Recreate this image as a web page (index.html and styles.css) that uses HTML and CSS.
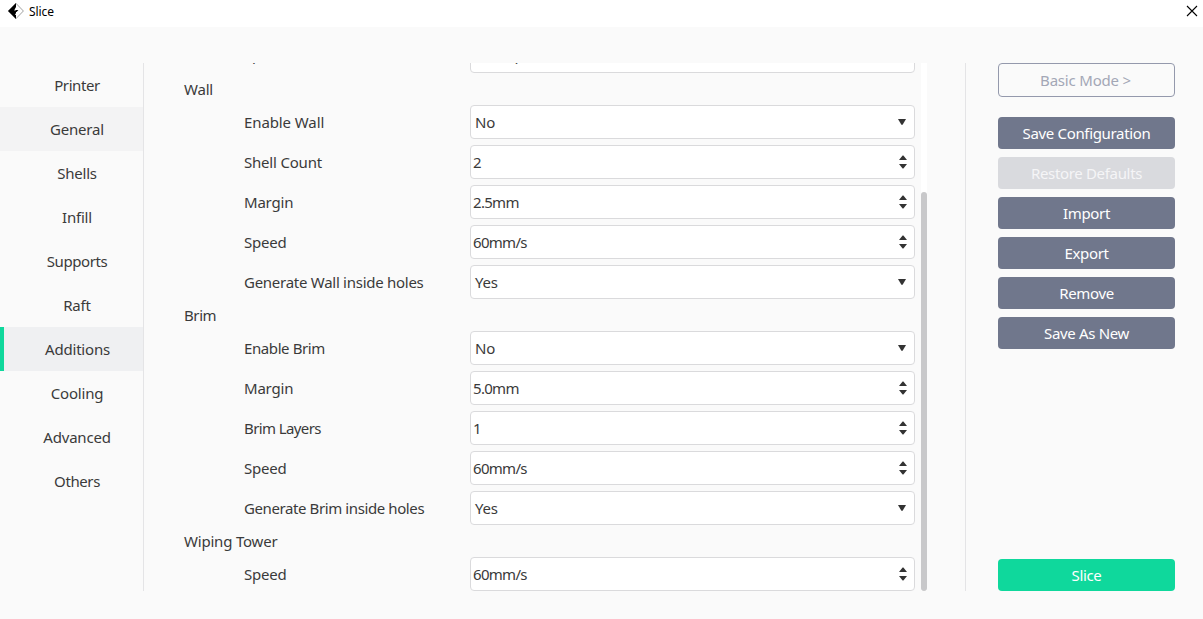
FILE: index.html
```html
<!DOCTYPE html>
<html lang="en">
<head>
<meta charset="utf-8">
<title>Slice</title>
<link rel="stylesheet" href="styles.css">
</head>
<body>
<svg width="0" height="0" class="defs" aria-hidden="true">
  <symbol id="drop" viewBox="0 0 8 6"><path d="M0 0h8L4.6 5.8H3.4z"/></symbol>
  <symbol id="spin" viewBox="0 0 8 14"><path d="M0 5L3.6 .6h.8L8 5zM0 9h8l-3.6 4.4h-.8z"/></symbol>
</svg>
<header class="titlebar">
  <svg class="logo" width="16" height="16" viewBox="0 0 16 16"><path d="M8 .4L15.4 8 8 15.6.6 8z" fill="#fff" stroke="#888" stroke-width=".8"/><path d="M8 0v4L6.6 6.5v1.6l1.4-1h2.4L8.6 9H8v1.2L6.8 11.4 8 12v4L0 8z" fill="#000"/></svg>
  <span class="title">Slice</span>
  <svg class="close" width="12" height="12" viewBox="0 0 12 12"><path d="M1 1l10 10M11 1L1 11" stroke="#000" stroke-width="1.1"/></svg>
</header>
<main class="content">
  <nav class="tabs">
    <a class="tab tight">Printer</a>
    <a class="tab hover">General</a>
    <a class="tab">Shells</a>
    <a class="tab">Infill</a>
    <a class="tab tight">Supports</a>
    <a class="tab">Raft</a>
    <a class="tab active">Additions</a>
    <a class="tab">Cooling</a>
    <a class="tab">Advanced</a>
    <a class="tab tight">Others</a>
  </nav>
  <section class="settings">
    <div class="row scrolled"><label>Speed</label><div class="field spin"><span>60mm<span class="slash">/</span>s</span><svg><use href="#spin"/></svg></div></div>
    <h2>Wall</h2>
    <div class="row"><label class="loose">Enable Wall</label><div class="field drop">No<svg><use href="#drop"/></svg></div></div>
    <div class="row"><label>Shell Count</label><div class="field spin">2<svg><use href="#spin"/></svg></div></div>
    <div class="row"><label>Margin</label><div class="field spin">2.5mm<svg><use href="#spin"/></svg></div></div>
    <div class="row"><label>Speed</label><div class="field spin">60mm/s<svg><use href="#spin"/></svg></div></div>
    <div class="row"><label class="snug">Generate Wall inside holes</label><div class="field drop">Yes<svg><use href="#drop"/></svg></div></div>
    <h2 class="tight">Brim</h2>
    <div class="row"><label class="tight">Enable Brim</label><div class="field drop">No<svg><use href="#drop"/></svg></div></div>
    <div class="row"><label>Margin</label><div class="field spin">5.0mm<svg><use href="#spin"/></svg></div></div>
    <div class="row"><label class="tighter">Brim Layers</label><div class="field spin">1<svg><use href="#spin"/></svg></div></div>
    <div class="row"><label>Speed</label><div class="field spin">60mm/s<svg><use href="#spin"/></svg></div></div>
    <div class="row"><label class="tight">Generate Brim inside holes</label><div class="field drop">Yes<svg><use href="#drop"/></svg></div></div>
    <h2>Wiping Tower</h2>
    <div class="row"><label>Speed</label><div class="field spin">60mm/s<svg><use href="#spin"/></svg></div></div>
  </section>
  <div class="scrollbar"><div class="thumb"></div></div>
  <aside class="actions">
    <button class="mode">Basic Mode &gt;</button>
    <button>Save Configuration</button>
    <button class="disabled">Restore Defaults</button>
    <button>Import</button>
    <button>Export</button>
    <button>Remove</button>
    <button>Save As New</button>
    <button class="primary">Slice</button>
  </aside>
</main>
</body>
</html>
```
FILE: styles.css
```css
* { box-sizing: border-box; }
body {
  margin: 0;
  height: 619px;
  overflow: hidden;
  display: flex;
  flex-direction: column;
  background: #fafafa;
  color: #3a3a3a;
  font: 15px/20px "Noto Sans", "Open Sans", sans-serif;
  letter-spacing: -0.2px;
}
.loose { letter-spacing: -0.1px; }
.snug { letter-spacing: -0.27px; }
.tight { letter-spacing: -0.4px; }
.tighter { letter-spacing: -0.6px; }
.defs { position: absolute; }
.titlebar {
  height: 27px;
  flex: none;
  display: flex;
  align-items: flex-start;
  padding: 3px 5px 0 8px;
  background: #fff;
  color: #000;
}
.title { margin: -1px auto 0 5px; font-size: 12px; letter-spacing: -0.1px; }
.close { margin-top: 2px; }
.content { height: 564px; padding: 36px 28px 0 0; display: flex; }
.tabs { width: 144px; border-right: 1px solid #e4e4e6; }
.tab {
  display: flex;
  height: 44px;
  align-items: center;
  justify-content: center;
  padding-left: 11px;
}
.hover { background: #f3f3f4; }
.active { background: #eff0f2; border-left: 4px solid #0fd89c; padding-left: 8px; }
.settings {
  width: 771px;
  height: 528px;
  padding-left: 40px;
  display: flex;
  flex-direction: column;
  justify-content: flex-end;
  gap: 6px;
  overflow: hidden;
}
h2 { margin: 0; flex: none; height: 20px; font: inherit; }
.row { flex: none; height: 34px; display: flex; align-items: center; padding-left: 60px; }
label { width: 226px; }
.field {
  flex: 1;
  height: 34px;
  display: flex;
  align-items: center;
  justify-content: space-between;
  background: #fff;
  border: 1px solid #dadadc;
  border-radius: 4px;
}
.field svg { fill: #333; }
.spin { padding: 0 7px 0 2px; letter-spacing: -0.7px; }
.spin svg { width: 8px; height: 14px; }
.drop { padding: 0 8px 0 4px; }
.drop svg { width: 8px; height: 6px; margin-top: -1px; }
.scrolled label { padding-bottom: 4px; }
.scrolled .spin svg { margin-bottom: 2px; }
.slash { display: inline-block; line-height: 1; vertical-align: -2px; }
.scrollbar { width: 6px; margin-left: 6px; padding-top: 129px; background: #fff; }
.thumb { height: 399px; border-radius: 3px; background: #c8c8ca; }
.actions {
  margin-left: 38px;
  flex: 1;
  padding-left: 32px;
  border-left: 1px solid #e4e4e6;
  display: flex;
  flex-direction: column;
  gap: 8px;
}
button {
  height: 32px;
  padding: 0;
  border: 0;
  border-radius: 4px;
  background: #70778c;
  color: #fff;
  font: inherit;
  letter-spacing: -0.33px;
}
.mode { height: 34px; margin-bottom: 12px; padding-right: 2px; border: 1px solid #9499ac; background: #fafafa; color: #a3a7b6; letter-spacing: -0.2px; }
.disabled { background: #d9dade; color: #f5f5f7; }
.primary { margin-top: auto; background: #0fd89c; }
```
